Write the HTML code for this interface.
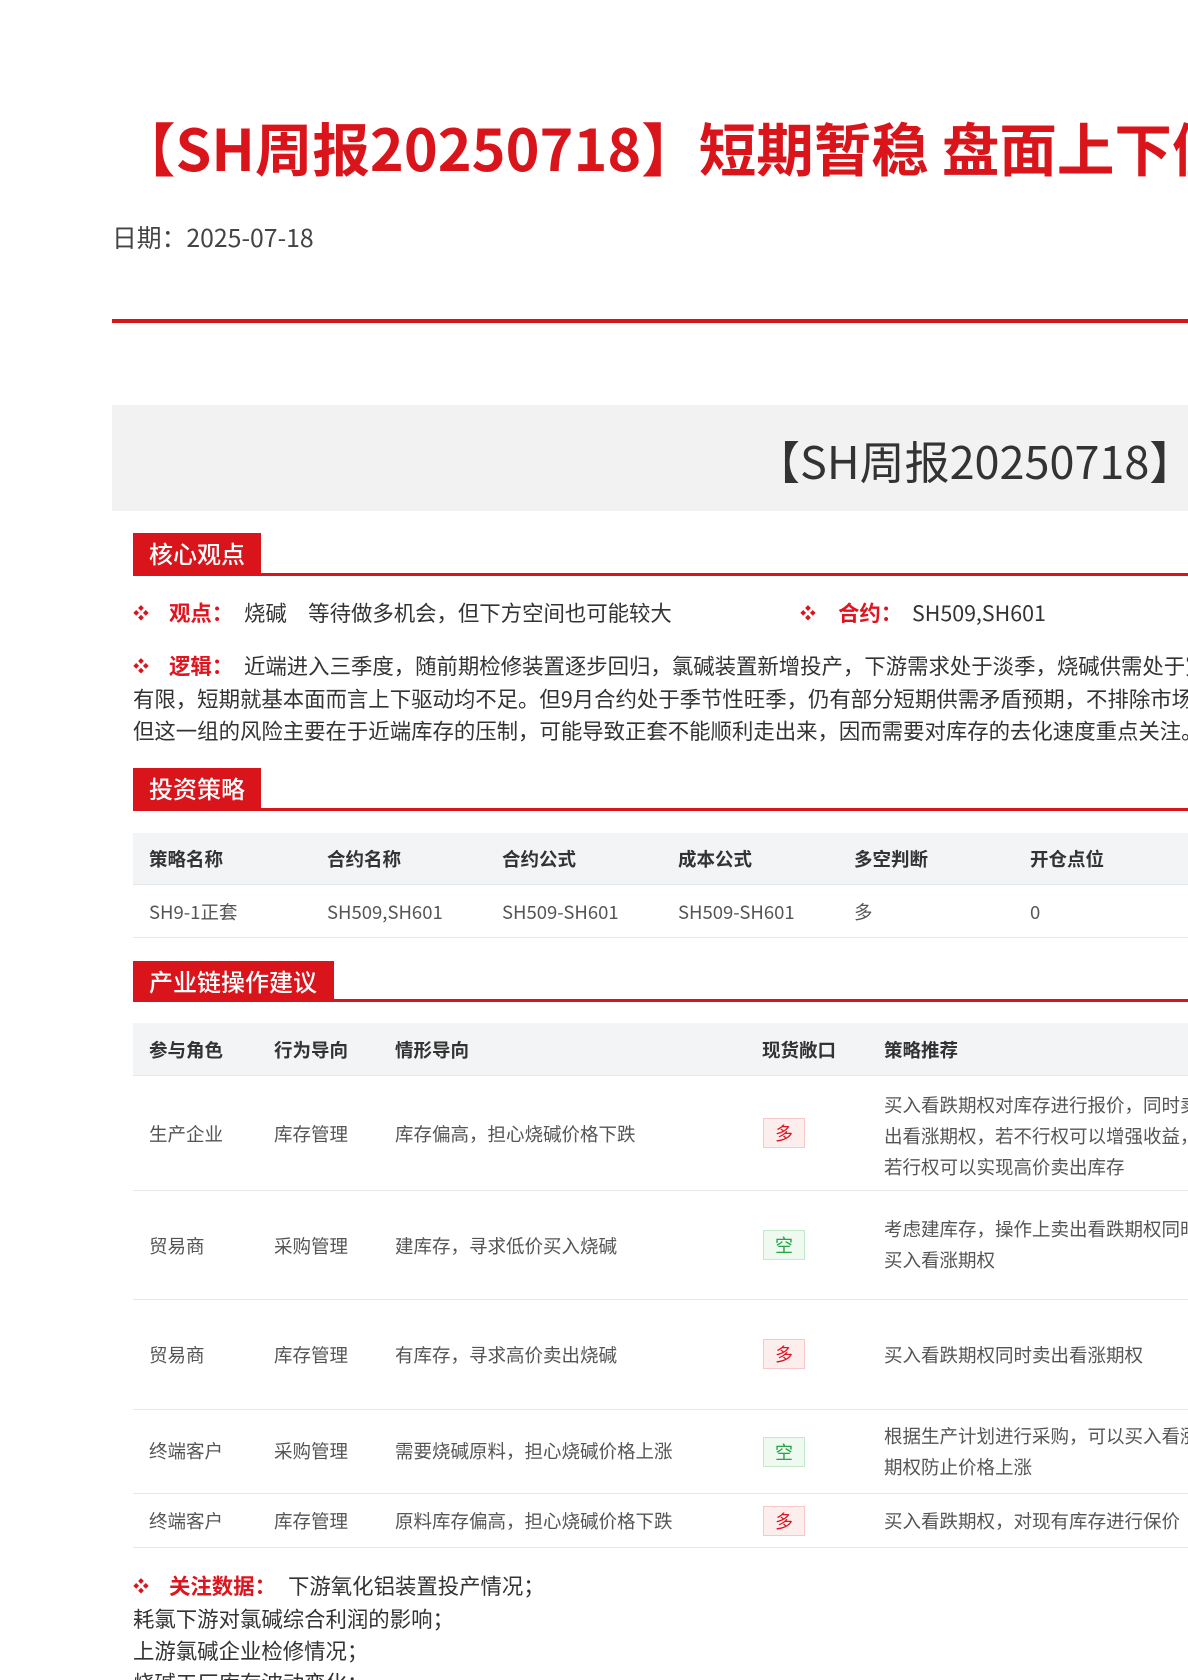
<!DOCTYPE html>
<html><head><meta charset="utf-8"><style>
*{margin:0;padding:0;box-sizing:border-box}
html,body{width:1188px;height:1680px;overflow:hidden}
body{background:#fff;position:relative;font-family:"Noto Sans CJK SC","Liberation Sans",sans-serif;color:#333}
.a{position:absolute;white-space:nowrap;line-height:1.2}
.red{color:#e0141e}
.sec{position:absolute;left:133px;height:40px;background:#d9141b;color:#fff;font-size:24px;font-weight:500;line-height:40px;padding-left:16px}
.sl{position:absolute;left:133px;right:0;height:3px;background:#d9141b}
.b{position:absolute;color:#d9141b;font-size:16px;line-height:1.2}
.t{font-size:21.4px;color:#333}
.hd{position:absolute;left:133px;right:0;background:#f3f4f6}
.hl{position:absolute;left:133px;right:0;height:1px;background:#e4e7ec}
.th{font-size:18.5px;font-weight:bold;color:#333}
.td{font-size:18.5px;color:#555}
.bd{position:absolute;left:763px;width:42px;height:30px;font-size:18px;line-height:28px;text-align:center;border:1px solid}
.dd{color:#e0141e;background:#fdeeee;border-color:#f8c7c7}
.kk{color:#2aa245;background:#eef9ef;border-color:#c5e8cb}
</style></head><body>
<div style="position:absolute;left:0;top:0;width:1188px;height:1680px;overflow:hidden">
<div class="a" style="left:118px;top:112px;font-size:57.5px;font-weight:bold;color:#d9141b">【SH周报20250718】短期暂稳 盘面上下僵持</div>
<div class="a" style="left:112px;top:223px;font-size:24.8px;color:#444">日期：2025-07-18</div>
<div style="position:absolute;left:112px;right:0;top:319px;height:4px;background:#d9141b"></div>
<div style="position:absolute;left:112px;right:0;top:405px;height:106px;background:#f2f2f2"></div>
<div class="a" style="left:755px;top:433px;font-size:45px;color:#333">【SH周报20250718】短期暂稳</div>

<div class="sec" style="top:533px;width:128px">核心观点</div><div class="sl" style="top:573px"></div>
<div class="b" style="left:133px;top:603px">❖</div>
<div class="a t" style="left:169px;top:600px"><b class="red">观点：</b></div>
<div class="a t" style="left:244px;top:600px">烧碱　等待做多机会，但下方空间也可能较大</div>
<div class="b" style="left:800px;top:603px">❖</div>
<div class="a t" style="left:838px;top:600px"><b class="red">合约：</b></div>
<div class="a t" style="left:912px;top:600px">SH509,SH601</div>
<div class="b" style="left:133px;top:656px">❖</div>
<div class="a t" style="left:169px;top:653px"><b class="red">逻辑：</b></div>
<div class="a t" style="left:244px;top:653px">近端进入三季度，随前期检修装置逐步回归，氯碱装置新增投产，下游需求处于淡季，烧碱供需处于宽松格局</div>
<div class="a t" style="left:133px;top:686px">有限，短期就基本面而言上下驱动均不足。但9月合约处于季节性旺季，仍有部分短期供需矛盾预期，不排除市场炒作</div>
<div class="a t" style="left:133px;top:718px">但这一组的风险主要在于近端库存的压制，可能导致正套不能顺利走出来，因而需要对库存的去化速度重点关注。</div>

<div class="sec" style="top:768px;width:128px">投资策略</div><div class="sl" style="top:808px"></div>
<div class="hd" style="top:833px;height:51px"></div><div class="hl" style="top:884px"></div><div class="hl" style="top:937px"></div>
<div class="a th" style="left:149px;top:848px">策略名称</div><div class="a th" style="left:327px;top:848px">合约名称</div><div class="a th" style="left:502px;top:848px">合约公式</div><div class="a th" style="left:678px;top:848px">成本公式</div><div class="a th" style="left:854px;top:848px">多空判断</div><div class="a th" style="left:1030px;top:848px">开仓点位</div>
<div class="a td" style="left:149px;top:901px">SH9-1正套</div><div class="a td" style="left:327px;top:901px">SH509,SH601</div><div class="a td" style="left:502px;top:901px">SH509-SH601</div><div class="a td" style="left:678px;top:901px">SH509-SH601</div><div class="a td" style="left:854px;top:901px">多</div><div class="a td" style="left:1030px;top:901px">0</div>

<div class="sec" style="top:961px;width:201px">产业链操作建议</div><div class="sl" style="top:999px"></div>
<div class="hd" style="top:1023px;height:52px"></div>
<div class="hl" style="top:1075px"></div><div class="hl" style="top:1190px"></div><div class="hl" style="top:1299px"></div><div class="hl" style="top:1409px"></div><div class="hl" style="top:1493px"></div><div class="hl" style="top:1547px"></div>
<div class="a th" style="left:149px;top:1039px">参与角色</div><div class="a th" style="left:274px;top:1039px">行为导向</div><div class="a th" style="left:395px;top:1039px">情形导向</div><div class="a th" style="left:762px;top:1039px">现货敞口</div><div class="a th" style="left:884px;top:1039px">策略推荐</div>

<div class="a td" style="left:149px;top:1123px">生产企业</div><div class="a td" style="left:274px;top:1123px">库存管理</div><div class="a td" style="left:395px;top:1123px">库存偏高，担心烧碱价格下跌</div><div class="bd dd" style="top:1118px">多</div>
<div class="a td" style="left:884px;top:1090px;line-height:31px">买入看跌期权对库存进行报价，同时卖<br>出看涨期权，若不行权可以增强收益，<br>若行权可以实现高价卖出库存</div>

<div class="a td" style="left:149px;top:1235px">贸易商</div><div class="a td" style="left:274px;top:1235px">采购管理</div><div class="a td" style="left:395px;top:1235px">建库存，寻求低价买入烧碱</div><div class="bd kk" style="top:1230px">空</div>
<div class="a td" style="left:884px;top:1214px;line-height:31px">考虑建库存，操作上卖出看跌期权同时<br>买入看涨期权</div>

<div class="a td" style="left:149px;top:1344px">贸易商</div><div class="a td" style="left:274px;top:1344px">库存管理</div><div class="a td" style="left:395px;top:1344px">有库存，寻求高价卖出烧碱</div><div class="bd dd" style="top:1339px">多</div>
<div class="a td" style="left:884px;top:1344px">买入看跌期权同时卖出看涨期权</div>

<div class="a td" style="left:149px;top:1440px">终端客户</div><div class="a td" style="left:274px;top:1440px">采购管理</div><div class="a td" style="left:395px;top:1440px">需要烧碱原料，担心烧碱价格上涨</div><div class="bd kk" style="top:1437px">空</div>
<div class="a td" style="left:884px;top:1421px;line-height:31px">根据生产计划进行采购，可以买入看涨<br>期权防止价格上涨</div>

<div class="a td" style="left:149px;top:1510px">终端客户</div><div class="a td" style="left:274px;top:1510px">库存管理</div><div class="a td" style="left:395px;top:1510px">原料库存偏高，担心烧碱价格下跌</div><div class="bd dd" style="top:1506px">多</div>
<div class="a td" style="left:884px;top:1510px">买入看跌期权，对现有库存进行保价</div>

<div class="b" style="left:133px;top:1576px">❖</div>
<div class="a t" style="left:169px;top:1573px"><b class="red">关注数据：</b></div>
<div class="a t" style="left:288px;top:1573px">下游氧化铝装置投产情况；</div>
<div class="a t" style="left:133px;top:1606px">耗氯下游对氯碱综合利润的影响；</div>
<div class="a t" style="left:133px;top:1638px">上游氯碱企业检修情况；</div>
<div class="a t" style="left:133px;top:1670px">烧碱工厂库存波动变化；</div>
</div>
</body></html>
